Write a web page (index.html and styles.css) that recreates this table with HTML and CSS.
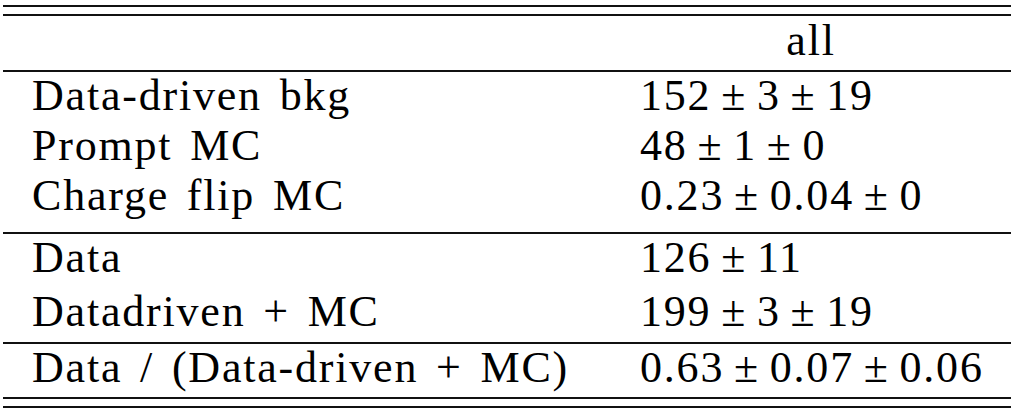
FILE: index.html
```html
<!DOCTYPE html>
<html lang="en">
<head>
  <meta charset="UTF-8">
  <title>Yield table</title>
  <link rel="stylesheet" href="styles.css">
</head>
<body>
  <div class="booktab">
    <table class="yields">
      <colgroup>
        <col class="col-label">
        <col class="col-value">
      </colgroup>
      <thead>
        <tr>
          <th></th>
          <th class="center">all</th>
        </tr>
      </thead>
      <tbody>
        <tr>
          <td>Data-driven bkg</td>
          <td class="math">152 ± 3 ± 19</td>
        </tr>
        <tr>
          <td>Prompt MC</td>
          <td class="math">48 ± 1 ± 0</td>
        </tr>
        <tr class="group-end">
          <td>Charge flip MC</td>
          <td class="math">0.23 ± 0.04 ± 0</td>
        </tr>
        <tr class="wide">
          <td>Data</td>
          <td class="math">126 ± 11</td>
        </tr>
        <tr class="wide group-end tight">
          <td>Datadriven + MC</td>
          <td class="math">199 ± 3 ± 19</td>
        </tr>
        <tr class="ratio">
          <td>Data / (Data-driven + MC)</td>
          <td class="math">0.63 ± 0.07 ± 0.06</td>
        </tr>
      </tbody>
    </table>
  </div>
</body>
</html>
```

FILE: styles.css
```css
body {
  margin: 0;
  padding: 0;
  background-color: #fff;
  color: #000;
  font-family: "Liberation Serif", "Times New Roman", serif;
}
.booktab {
  width: 1008px;
  margin: 5px 0 0 3px;
  padding: 7px 0;
  border-top: 2px solid #111;
  border-bottom: 2px solid #111;
}
.yields {
  width: 100%;
  table-layout: fixed;
  border-collapse: separate;
  border-spacing: 0;
  border-top: 2px solid #111;
  border-bottom: 2px solid #111;
  font-size: 44px;
  letter-spacing: 1.8px;
  word-spacing: 5px;
}
.col-label {
  width: 608px;
}
.col-value {
  width: 400px;
}
.yields th, .yields td {
  padding: 1px 29px 3px;
  line-height: 46px;
  height: 46px;
  text-align: left;
  font-weight: normal;
  white-space: nowrap;
  vertical-align: top;
}
.yields th {
  padding: 2px 29px 6px;
  border-bottom: 2px solid #111;
}
.yields th.center {
  text-align: center;
}
.yields .math {
  word-spacing: -3px;
}
.yields tr.wide td {
  padding-bottom: 7px;
}
.yields tr.group-end td {
  padding-bottom: 13px;
  border-bottom: 2px solid #111;
}
.yields tr.group-end.tight td {
  padding-bottom: 7px;
}
.yields tr.ratio td {
  padding-bottom: 6px;
}
```
